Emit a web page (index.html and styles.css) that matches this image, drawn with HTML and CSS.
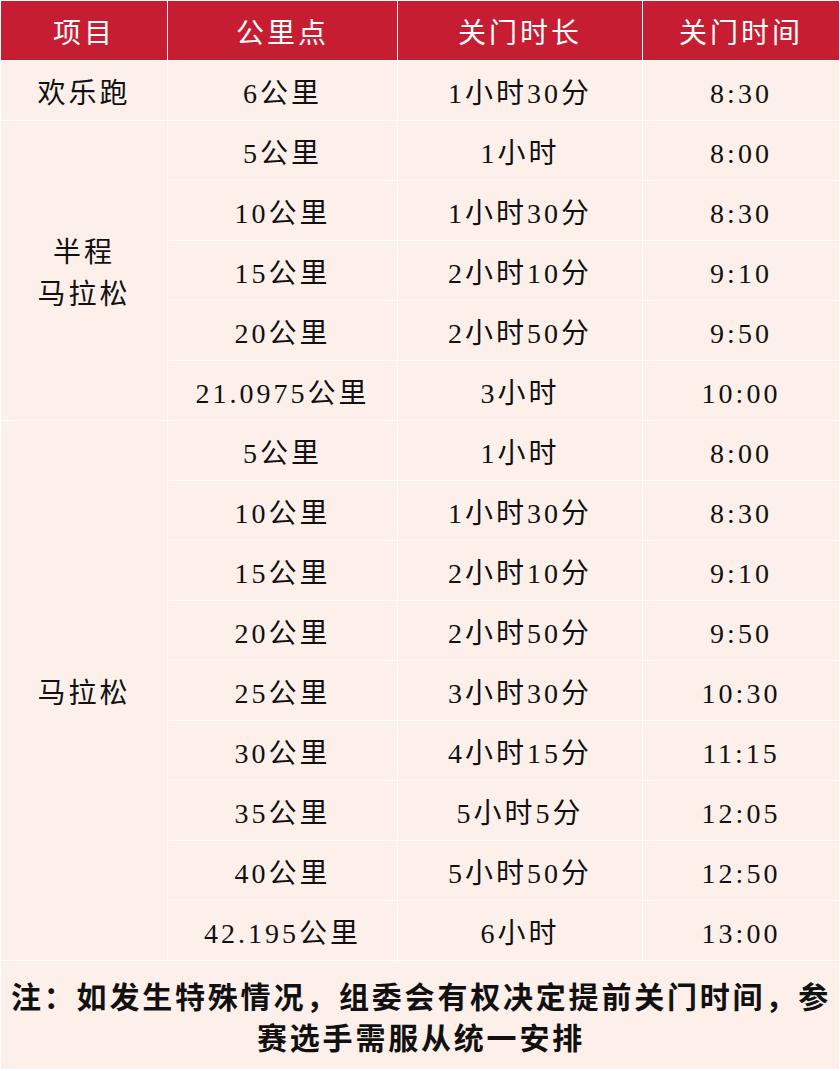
FILE: index.html
```html
<!DOCTYPE html>
<html lang="zh-CN">
<head>
<meta charset="utf-8">
<title>关门时间</title>
<link rel="stylesheet" href="styles.css">
</head>
<body>
<table class="cutoff">
  <colgroup>
    <col class="c1"><col class="c2"><col class="c3"><col class="c4">
  </colgroup>
  <thead>
    <tr class="head"><th>项目</th><th>公里点</th><th>关门时长</th><th>关门时间</th></tr>
  </thead>
  <tbody>
    <tr><td>欢乐跑</td><td>6公里</td><td>1小时30分</td><td>8:30</td></tr>
    <tr><td rowspan="5">半程<br>马拉松</td><td>5公里</td><td>1小时</td><td>8:00</td></tr>
    <tr><td>10公里</td><td>1小时30分</td><td>8:30</td></tr>
    <tr><td>15公里</td><td>2小时10分</td><td>9:10</td></tr>
    <tr><td>20公里</td><td>2小时50分</td><td>9:50</td></tr>
    <tr><td>21.0975公里</td><td>3小时</td><td>10:00</td></tr>
    <tr><td rowspan="9">马拉松</td><td>5公里</td><td>1小时</td><td>8:00</td></tr>
    <tr><td>10公里</td><td>1小时30分</td><td>8:30</td></tr>
    <tr><td>15公里</td><td>2小时10分</td><td>9:10</td></tr>
    <tr><td>20公里</td><td>2小时50分</td><td>9:50</td></tr>
    <tr><td>25公里</td><td>3小时30分</td><td>10:30</td></tr>
    <tr><td>30公里</td><td>4小时15分</td><td>11:15</td></tr>
    <tr><td>35公里</td><td>5小时5分</td><td>12:05</td></tr>
    <tr><td>40公里</td><td>5小时50分</td><td>12:50</td></tr>
    <tr><td>42.195公里</td><td>6小时</td><td>13:00</td></tr>
    <tr><td colspan="4" class="note">注：如发生特殊情况，组委会有权决定提前关门时间，参赛选手需服从统一安排</td></tr>
  </tbody>
</table>
</body>
</html>
```
FILE: styles.css
```css
html, body {
  margin: 0;
  padding: 0;
  background: #ffffff;
}
.cutoff {
  width: 840px;
  border-collapse: separate;
  border-spacing: 1px;
  background: #ffffff;
  table-layout: fixed;
  font-family: "Liberation Serif", "Noto Sans CJK SC", serif;
  font-size: 28px;
  letter-spacing: 3px;
  color: #111111;
}
.c1 { width: 166px; }
.c2 { width: 229px; }
.c3 { width: 244px; }
.c4 { width: 196px; }
.cutoff th,
.cutoff td {
  height: 59px;
  padding: 6px 0 0 0;
  box-sizing: border-box;
  text-align: center;
  vertical-align: middle;
  line-height: 42px;
  background: #fdf0eb;
  font-weight: normal;
}
.cutoff .head th {
  background: #c71d32;
  color: #ffffff;
}
.cutoff td.note {
  height: 108px;
  padding: 8px 2px 2px 4px;
  font-weight: bold;
  font-size: 30px;
  letter-spacing: 2.8px;
  line-height: 41px;
}
```
